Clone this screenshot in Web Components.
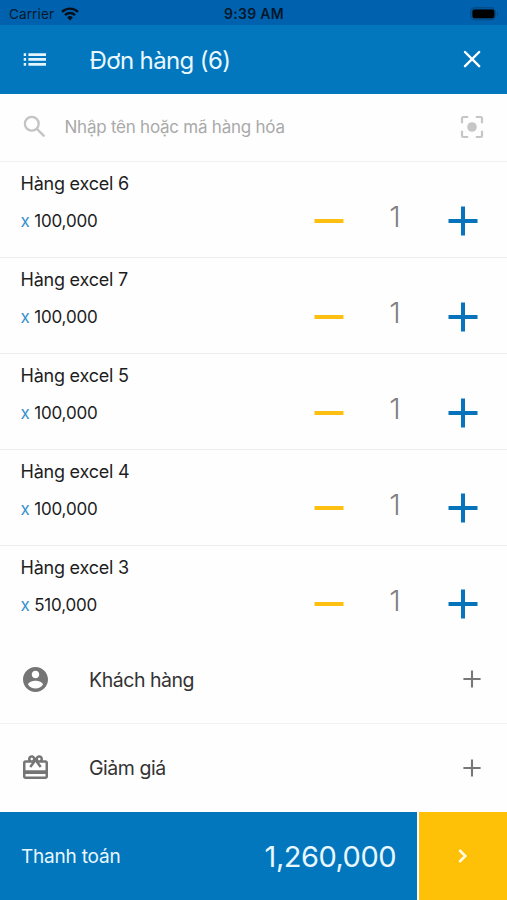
<!DOCTYPE html>
<html lang="vi">
<head>
<meta charset="utf-8">
<meta name="viewport" content="width=device-width, initial-scale=1">
<title>Đơn hàng</title>
<style>
html,body{margin:0;height:900px;overflow:hidden;background:#fefefe}
body{font-family:Inter,"Liberation Sans",sans-serif;color:#1d1d1f}
</style>
</head>
<body>
<order-screen></order-screen>
<script>
const define = (name, html) => {
  const t = document.createElement('template');
  t.innerHTML = '<style>*{box-sizing:border-box}svg{display:block;flex:none}</style>' + html;
  customElements.define(name, class extends HTMLElement {
    constructor() {
      super();
      this.attachShadow({mode: 'open'}).append(t.content.cloneNode(true));
    }
  });
};

define('status-bar', `
<style>
:host{display:grid;grid-template-columns:1fr auto 1fr;align-items:center;height:25px;padding:2px 8px 0 9px;background:#0062ae;color:#04182c;font-size:13.5px;line-height:24px}
.l{display:flex;align-items:center;gap:7px;letter-spacing:.12px}
.t{font-size:14px;font-weight:600;letter-spacing:.3px}
.b{justify-self:end}
</style>
<div class="l"><span>Carrier</span><svg width="18" height="14" viewBox="0 0 18 14" fill="none" stroke="#04101c" stroke-width="2.4"><path d="M1 4.9a11.4 11.4 0 0 1 16 0M4 8.1a7.1 7.1 0 0 1 10 0"/><path d="M9 13.4 6.1 10.4a4.1 4.1 0 0 1 5.8 0Z" fill="#04101c" stroke="none"/></svg></div>
<span class="t">9:39 AM</span>
<svg class="b" width="29" height="14" viewBox="0 0 29 14"><rect x=".6" y=".6" width="24.8" height="12.4" rx="3.8" fill="#00559a" stroke="#064c86"/><rect x="2.4" y="2.4" width="22" height="8.8" rx="2.2" fill="#000"/><path d="M27 4.6c1.7.7 1.7 3.7 0 4.4Z" fill="#064c86"/></svg>`);

define('app-header', `
<style>
:host{display:flex;align-items:center;height:68.5px;padding:0 25px 0 23px;background:#0277bd;color:#e9f7ff;font-size:24px}
.title{flex:1;margin-left:43.5px;line-height:34px;padding-top:3px;letter-spacing:-.62px}
</style>
<svg width="23" height="16" viewBox="0 0 23 16" fill="#e4f5ff"><path d="M.7 2.2h2.4v2.7H.7zM5.4 2.2H23v2.7H5.4zM.7 7.1h2.4v2.7H.7zM5.4 7.1H23v2.7H5.4zM.7 12h2.4v2.7H.7zM5.4 12H23v2.7H5.4z"/></svg>
<span class="title"><slot></slot></span>
<svg width="20" height="20" viewBox="0 0 20 20" stroke="#fff" stroke-width="2.4" stroke-linecap="round"><path d="m3 3 14.2 14.2M17.2 3 3 17.2"/></svg>`);

define('search-bar', `
<style>
:host{display:flex;align-items:center;height:68.9px;padding:0 23px 1px;border-bottom:1px solid #f0f0f0;color:#a9a9a9;font-size:17px}
span{flex:1;margin-left:17.5px;line-height:24px;letter-spacing:-.24px}
</style>
<svg width="24" height="24" viewBox="0 0 24 24" fill="none" stroke="#c4c4c4" stroke-width="2.3"><circle cx="8.8" cy="8.8" r="6.9"/><path d="m13.9 13.9 7.5 7.5"/></svg>
<span><slot></slot></span>
<svg width="24" height="24" viewBox="0 0 24 24" fill="none" stroke="#c6c6c6" stroke-width="2.2"><path d="M2 8.2V3.4Q2 2 3.4 2h4.8M15.8 2h4.8Q22 2 22 3.4v4.8M22 15.8v4.8Q22 22 20.6 22h-4.8M8.2 22H3.4Q2 22 2 20.6v-4.8"/><circle cx="12" cy="12" r="4.8" fill="#c6c6c6" stroke="none"/></svg>`);

define('order-item', `
<style>
:host{display:grid;grid-template-columns:1fr 30px 76px 58px;grid-template-rows:43px 32px;height:95.85px;padding:0 29px 0 20.5px;border-bottom:1.5px solid #ececec}
:host([last]){border-bottom:0;height:90.1px}
.n{grid-column:1/-1;font-size:18px;line-height:43px;letter-spacing:-.22px}
.p{font-size:17px;line-height:32.4px;letter-spacing:-.18px}
.p i{font-style:normal;color:#3a93cd}
.q{font-size:29px;font-weight:300;color:#808080;line-height:24px;text-align:center;padding-left:26px}
svg{margin-top:.5px}
.plus{margin-left:28px}
</style>
<div class="n"><slot name="name"></slot></div>
<div class="p"><i>x</i> <slot name="price"></slot></div>
<svg width="30" height="30" viewBox="0 0 30 30"><path d="M.5 13h29v4H.5z" fill="#fdc010"/></svg>
<div class="q"><slot name="qty"></slot></div>
<svg class="plus" width="30" height="30" viewBox="0 0 30 30"><path d="M.5 13H13V.5h4V13h12.5v4H17v12.5h-4V17H.5z" fill="#0773ba"/></svg>`);

define('option-row', `
<style>
:host{display:flex;align-items:center;height:88px;padding:0 26px 0 23px;font-size:19.5px;color:#333}
:host([divided]){border-bottom:1px solid #f3f3f3}
.i{width:25px;margin-right:41px}
.t{flex:1;line-height:28px;letter-spacing:-.46px;padding-top:1px}
</style>
<div class="i"><slot name="icon"></slot></div><span class="t"><slot></slot></span>
<svg width="18" height="18" viewBox="0 0 18 18" stroke="#777" stroke-width="2.1"><path d="M.4 9h17.2M9 .4v17.2"/></svg>`);

define('checkout-bar', `
<style>
:host{display:grid;grid-template-columns:416.5px 1fr;gap:2.5px;height:88.5px;color:#e9f7ff}
.pay{display:flex;align-items:center;justify-content:space-between;background:#0277bd;padding:0 20.5px 0 21px}
.l{font-size:19px;letter-spacing:-.2px;padding-top:1px}.v{font-size:29px;letter-spacing:-.5px;padding-top:1px}
.go{display:flex;align-items:center;justify-content:center;background:#ffc107}
</style>
<div class="pay"><span class="l"><slot name="label"></slot></span><span class="v"><slot name="total"></slot></span></div>
<div class="go"><svg width="12" height="16" viewBox="0 0 12 16" fill="none" stroke="#fffbe8" stroke-width="2.5"><path d="m2.3 2 6 6-6 6"/></svg></div>`);

const items = [['Hàng excel 6','100,000'],['Hàng excel 7','100,000'],['Hàng excel 5','100,000'],['Hàng excel 4','100,000'],['Hàng excel 3','510,000']];
define('order-screen', `
<style>:host{display:flex;flex-direction:column;width:507px;height:900px;background:#fefefe}
:host>*{flex:none}checkout-bar{margin-top:auto}</style>
<status-bar></status-bar>
<app-header>Đơn hàng (6)</app-header>
<search-bar>Nhập tên hoặc mã hàng hóa</search-bar>
${items.map(([n, p], i) => `<order-item${i === 4 ? ' last' : ''}><span slot="name">${n}</span><span slot="price">${p}</span><span slot="qty">1</span></order-item>`).join('')}
<option-row divided><svg slot="icon" width="25" height="25" viewBox="2 2 20 20" fill="#757575"><path d="M12 2C6.48 2 2 6.48 2 12s4.48 10 10 10 10-4.48 10-10S17.52 2 12 2zm0 3c1.66 0 3 1.34 3 3s-1.34 3-3 3-3-1.34-3-3 1.34-3 3-3zm0 14.2c-2.5 0-4.71-1.28-6-3.22.03-1.99 4-3.08 6-3.08 1.99 0 5.97 1.09 6 3.08-1.29 1.94-3.5 3.22-6 3.22z"/></svg>Khách hàng</option-row>
<option-row><svg slot="icon" width="25" height="25" viewBox="2 1.8 20 20" fill="#757575"><path d="M20 6h-2.18c.11-.31.18-.65.18-1 0-1.66-1.34-3-3-3-1.05 0-1.96.54-2.5 1.35l-.5.67-.5-.68C10.96 2.54 10.05 2 9 2 7.34 2 6 3.34 6 5c0 .35.07.69.18 1H4c-1.11 0-1.99.89-1.99 2L2 19c0 1.11.89 2 2 2h16c1.11 0 2-.89 2-2V8c0-1.11-.89-2-2-2zm-5-2c.55 0 1 .45 1 1s-.45 1-1 1-1-.45-1-1 .45-1 1-1zM9 4c.55 0 1 .45 1 1s-.45 1-1 1-1-.45-1-1 .45-1 1-1zm11 15H4v-2h16v2zm0-5H4V8h5.08L7 10.83 8.62 12 11 8.76l1-1.36 1 1.36L15.38 12 17 10.83 14.92 8H20v6z"/></svg>Giảm giá</option-row>
<checkout-bar><span slot="label">Thanh toán</span><span slot="total">1,260,000</span></checkout-bar>`);
</script>
</body>
</html>
